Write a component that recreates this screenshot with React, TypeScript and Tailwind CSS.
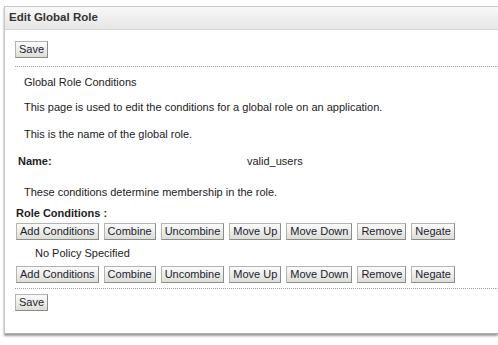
const buttons = ['Add Conditions', 'Combine', 'Uncombine', 'Move Up', 'Move Down', 'Remove', 'Negate']

function Btn({ label }: { label: string }) {
  return (
    <button className="h-[17px] px-[3px] whitespace-nowrap border border-[#b4b4b4] border-b-[#8c8c8c] border-r-[#8c8c8c] bg-gradient-to-b from-[#fbfbfb] to-[#deded8] text-[11px] leading-[15px] text-[#1c1c30] font-['Liberation_Sans',Arial,sans-serif]">
      {label}
    </button>
  )
}

function ButtonRow() {
  return (
    <div className="flex gap-[5px] pl-[11px]">
      {buttons.map((b) => (
        <Btn key={b} label={b} />
      ))}
    </div>
  )
}

export default function App() {
  return (
    <div className="w-[498px] h-[345px] bg-white pt-[6px] pl-[4px] font-['Liberation_Sans',Tahoma,sans-serif] text-[11px] text-[#222]">
      <div className="h-[328px] border-l border-t border-[#c8c8c8] shadow-[0_2px_2px_#9a9a9a] border-b border-b-[#b0b0b0]">
        {/* header */}
        <div className="h-[23px] bg-gradient-to-b from-[#f8f8f8] to-[#e6e6e6] border-b border-[#d6d6d6] pl-[4px] flex items-center">
          <span className="font-bold text-[11.5px] text-[#333]">Edit Global Role</span>
        </div>

        <div className="pt-[11px]">
          <div className="pl-[10px]">
            <Btn label="Save" />
          </div>
          <div className="ml-[10px] mt-[8px] border-t border-dotted border-[#a0a0a0]" />

          <div className="pl-[19px] mt-[6px]">
            <p className="h-[25px] leading-[18px]">Global Role Conditions</p>
            <p className="h-[27px] leading-[18px]">This page is used to edit the conditions for a global role on an application.</p>
            <p className="h-[27px] leading-[18px]">This is the name of the global role.</p>
          </div>

          <div className="flex pl-[13px] h-[31px] leading-[18px]">
            <span className="w-[229px] font-bold">Name:</span>
            <span>valid_users</span>
          </div>

          <p className="pl-[19px] h-[23px] leading-[18px]">These conditions determine membership in the role.</p>
          <p className="pl-[11px] h-[14px] leading-[14px] font-bold">Role Conditions :</p>

          <div className="mt-[3px]">
            <ButtonRow />
          </div>
          <p className="pl-[30px] h-[26px] leading-[26px]">No Policy Specified</p>
          <ButtonRow />
          <div className="ml-[10px] mt-[5px] border-t border-dotted border-[#a0a0a0]" />
          <div className="pl-[10px] mt-[5px]">
            <Btn label="Save" />
          </div>
        </div>
      </div>
    </div>
  )
}
